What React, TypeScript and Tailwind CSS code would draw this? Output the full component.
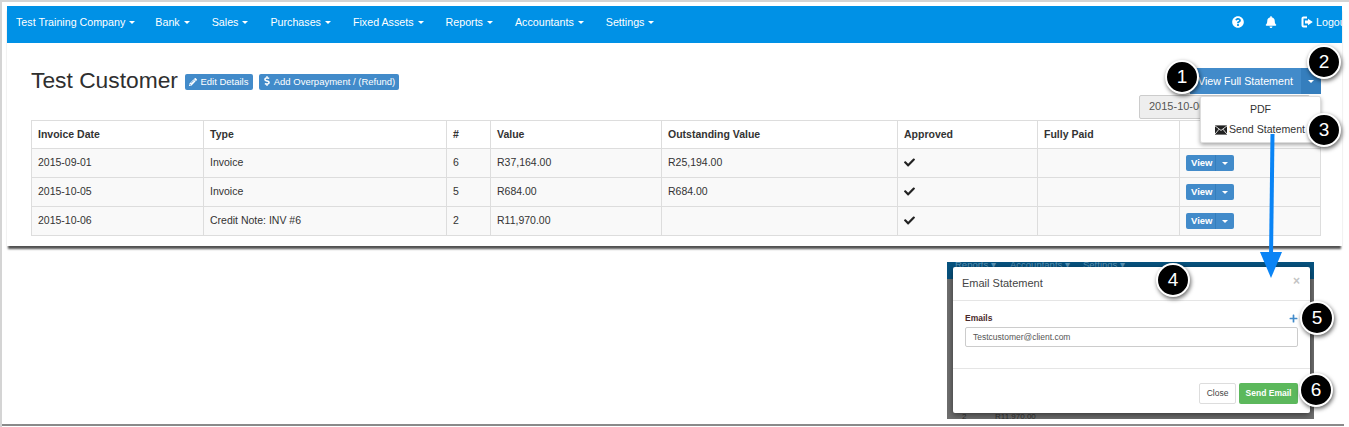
import { FaBell, FaCheck, FaDollarSign, FaPencilAlt, FaPlus, FaQuestionCircle } from "react-icons/fa";

const navItems = ["Test Training Company", "Bank", "Sales", "Purchases", "Fixed Assets", "Reports", "Accountants", "Settings"];

const rows = [
  { date: "2015-09-01", type: "Invoice", num: "6", value: "R37,164.00", outstanding: "R25,194.00" },
  { date: "2015-10-05", type: "Invoice", num: "5", value: "R684.00", outstanding: "R684.00" },
  { date: "2015-10-06", type: "Credit Note: INV #6", num: "2", value: "R11,970.00", outstanding: "" },
];

const Caret = ({ className = "" }: { className?: string }) => (
  <span className={`inline-block w-0 h-0 border-x-[3px] border-x-transparent border-t-[3px] border-t-current ${className}`} />
);

const Badge = ({ n, className }: { n: number; className: string }) => (
  <div className={`absolute w-[34px] h-[34px] rounded-full bg-black text-white text-[19px] flex items-center justify-center border-[2px] border-white shadow-[1px_2px_4px_rgba(0,0,0,0.6)] ${className}`}>
    {n}
  </div>
);

const ViewButton = () => (
  <div className="inline-flex h-[16px] rounded-[2px] overflow-hidden bg-[#428bca] text-white text-[9.5px] font-bold leading-[16px]">
    <span className="px-[5px] w-[29px]">View</span>
    <span className="w-[19px] border-l border-[#357ebd] flex items-center justify-center">
      <Caret />
    </span>
  </div>
);

const LogoutIcon = () => (
  <svg className="w-[12px] h-[12px] ml-[24px] shrink-0" viewBox="0 0 12 12" fill="none">
    <path d="M6 1.5H2.5A1 1 0 0 0 1.5 2.5V9.5A1 1 0 0 0 2.5 10.5H6" stroke="currentColor" strokeWidth="2" />
    <path d="M7 2.8L11.8 6L7 9.2V7.4H4V4.6H7Z" fill="currentColor" />
  </svg>
);

const MailIcon = () => (
  <svg width="12" height="10" viewBox="0 0 13 10">
    <rect width="13" height="10" fill="#222" />
    <path d="M0 0.5L6.5 5.5L13 0.5M0 9.5L4.5 4M13 9.5L8.5 4" stroke="#fff" strokeWidth="0.9" fill="none" />
  </svg>
);

const App = () => {
  return (
    <div className="relative w-[1349px] h-[427px] overflow-hidden bg-white font-['Liberation_Sans',Arial,sans-serif] text-[#333] border-l-[2px] border-t-[2px] border-[#d4d4d4]">
      <div className="pl-[5px] pt-[4px] w-[1340px]">
        <div className="w-[1335px] h-[240px] shadow-[0_4px_2px_-1px_rgba(50,50,50,0.85)]">
          <nav className="h-[37px] bg-[#0091e6] text-white text-[10.7px] flex items-center justify-between overflow-hidden pl-[9px] pb-[4px]">
            <div className="flex gap-[22px]">
              {navItems.map((item) => (
                <span key={item} className="flex items-center gap-[4px] whitespace-nowrap first:-mr-[2px]">
                  {item}
                  <Caret />
                </span>
              ))}
            </div>
            <div className="flex items-center w-[110px] shrink-0 overflow-hidden">
              <FaQuestionCircle className="w-[12px] h-[12px] shrink-0" />
              <FaBell className="w-[12px] h-[12px] ml-[21px] shrink-0" />
              <LogoutIcon />
              <span className="ml-[3px]">Logout</span>
            </div>
          </nav>

          <div className="pl-[24px] pr-[21px]">
            <div className="h-[77px] flex justify-between">
              <div className="flex items-center gap-[7px] pt-[1px] h-[75px]">
                <h1 className="text-[22.8px] font-normal text-[#2f2f2f] mb-[2px]">Test Customer</h1>
                <div className="flex gap-[6px] mt-[2px]">
                  <button className="h-[16px] w-[68px] rounded-[2px] bg-[#428bca] text-white text-[9.5px] flex items-center justify-center gap-[3px]">
                    <FaPencilAlt className="w-[8px] h-[8px]" />
                    Edit Details
                  </button>
                  <button className="h-[16px] w-[140px] rounded-[2px] bg-[#428bca] text-white text-[9.5px] flex items-center justify-center gap-[3px]">
                    <FaDollarSign className="w-[8px] h-[10px] mb-[2px]" />
                    Add Overpayment / (Refund)
                  </button>
                </div>
              </div>
              <div className="flex flex-col items-end pt-[25px]">
                <div className="flex h-[26px] bg-[#428bca] text-white text-[10.7px] leading-[26px]">
                  <span className="w-[111px] pl-[8px] whitespace-nowrap">View Full Statement</span>
                  <span className="w-[20px] bg-[#357ebd] flex items-center justify-center">
                    <Caret />
                  </span>
                </div>
                <div className="mr-[11px] mt-[1px] w-[171px] h-[24px] rounded-[2px] border border-[#ccc] bg-[#eee] text-[11px] leading-[21px] pl-[9px] text-[#555]">
                  2015-10-06
                </div>
              </div>
            </div>

            <table className="w-[1289px] table-fixed border-collapse text-[10.5px] text-[#333]">
              <colgroup>
                <col className="w-[172px]" />
                <col className="w-[243px]" />
                <col className="w-[44px]" />
                <col className="w-[171px]" />
                <col className="w-[236px]" />
                <col className="w-[140px]" />
                <col className="w-[142px]" />
                <col className="w-[141px]" />
              </colgroup>
              <thead>
                <tr className="h-[28px] font-bold">
                  {["Invoice Date", "Type", "#", "Value", "Outstanding Value", "Approved", "Fully Paid", ""].map((h, i) => (
                    <th key={i} className="border border-[#ddd] px-[6px] text-left font-bold">
                      {h}
                    </th>
                  ))}
                </tr>
              </thead>
              <tbody>
                {rows.map((row) => (
                  <tr key={row.date} className="h-[29px] bg-[#f9f9f9]">
                    <td className="border border-[#ddd] px-[6px]">{row.date}</td>
                    <td className="border border-[#ddd] px-[6px]">{row.type}</td>
                    <td className="border border-[#ddd] px-[6px]">{row.num}</td>
                    <td className="border border-[#ddd] px-[6px]">{row.value}</td>
                    <td className="border border-[#ddd] px-[6px]">{row.outstanding}</td>
                    <td className="border border-[#ddd] px-[6px]">
                      <FaCheck className="w-[11px] h-[11px] text-[#222] -mt-[2px]" />
                    </td>
                    <td className="border border-[#ddd] px-[6px]"></td>
                    <td className="border border-[#ddd] px-[6px] align-middle">
                      <div className="flex">
                        <ViewButton />
                      </div>
                    </td>
                  </tr>
                ))}
              </tbody>
            </table>
          </div>
        </div>
      </div>

      {/* outer frame of the screenshot */}
      <div className="absolute left-0 right-[5px] bottom-[1px] h-[2px] bg-[#8a8a8a]" />

      {/* dropdown */}
      <div className="absolute left-[1198px] top-[94px] w-[121px] h-[47px] bg-white border border-[#ddd] rounded-[2px] shadow-[0_2px_4px_rgba(0,0,0,0.35)] text-[10.6px] text-center">
        <div className="mt-[6px] leading-[13px]">PDF</div>
        <div className="mt-[7px] leading-[13px] flex items-center justify-center gap-[2px] -ml-[1px]">
          <MailIcon />
          Send Statement
        </div>
      </div>

      {/* dialog capture */}
      <div className="absolute left-[945px] top-[260px] w-[367px] h-[157px] bg-[#6f6f6f] overflow-hidden">
        <div className="h-[17px] bg-[#07527e] text-[#5a93b5] text-[9.5px] leading-[5px] overflow-hidden flex pl-[8px]">
          <span className="w-[55px]">Reports ▾</span>
          <span className="w-[73px]">Accountants ▾</span>
          <span>Settings ▾</span>
        </div>
        <div className="absolute left-[15px] bottom-0 h-[6px] flex text-[8px] leading-[8px] text-[#333]">
          <span className="w-[33px]">2</span>
          <span>R11,970.00</span>
        </div>
        <div className="absolute left-[6px] top-[5px] w-[357px] h-[146px] bg-white rounded-[2px] shadow-[0_2px_6px_rgba(0,0,0,0.5)] flex flex-col">
          <div className="h-[34px] border-b border-[#e5e5e5] flex items-center justify-between pl-[9px] pr-[10px] text-[11px] text-[#444]">
            Email Statement
            <span className="text-[#c4c4c4] text-[12px] font-bold mb-[6px]">×</span>
          </div>
          <div className="h-[68px] border-b border-[#e5e5e5] pl-[12px] pr-[12px] pt-[11px]">
            <div className="flex items-center justify-between h-[12px] text-[8.5px] font-bold text-[#4a2a2a]">
              Emails
              <FaPlus className="w-[9px] h-[9px] text-[#428bca]" />
            </div>
            <div className="mt-[3px] h-[20px] rounded-[2px] border border-[#ccc] text-[8.5px] leading-[18px] pl-[7px] text-[#555]">
              Testcustomer@client.com
            </div>
          </div>
          <div className="flex-1 flex items-center justify-end gap-[3px] pr-[12px] text-[8.5px] pt-[4px]">
            <button className="w-[37px] h-[21px] rounded-[2px] border border-[#ddd] text-[#444]">Close</button>
            <button className="w-[59px] h-[21px] rounded-[2px] bg-[#5cb85c] text-white font-bold">Send Email</button>
          </div>
        </div>
      </div>

      {/* arrow */}
      <svg className="absolute left-[1250px] top-[128px]" width="40" height="150" viewBox="0 0 40 150" fill="none">
        <path d="M20.5 4 L19 128" stroke="#0a84f5" strokeWidth="4" />
        <path d="M8 122 H30 L19 148 Z" fill="#0a84f5" />
      </svg>

      <Badge n={1} className="left-[1163px] top-[58px]" />
      <Badge n={2} className="left-[1305px] top-[43px]" />
      <Badge n={3} className="left-[1305px] top-[111px]" />
      <Badge n={4} className="left-[1154px] top-[261px]" />
      <Badge n={5} className="left-[1298px] top-[299px]" />
      <Badge n={6} className="left-[1297px] top-[371px]" />
    </div>
  );
};

export default App;
